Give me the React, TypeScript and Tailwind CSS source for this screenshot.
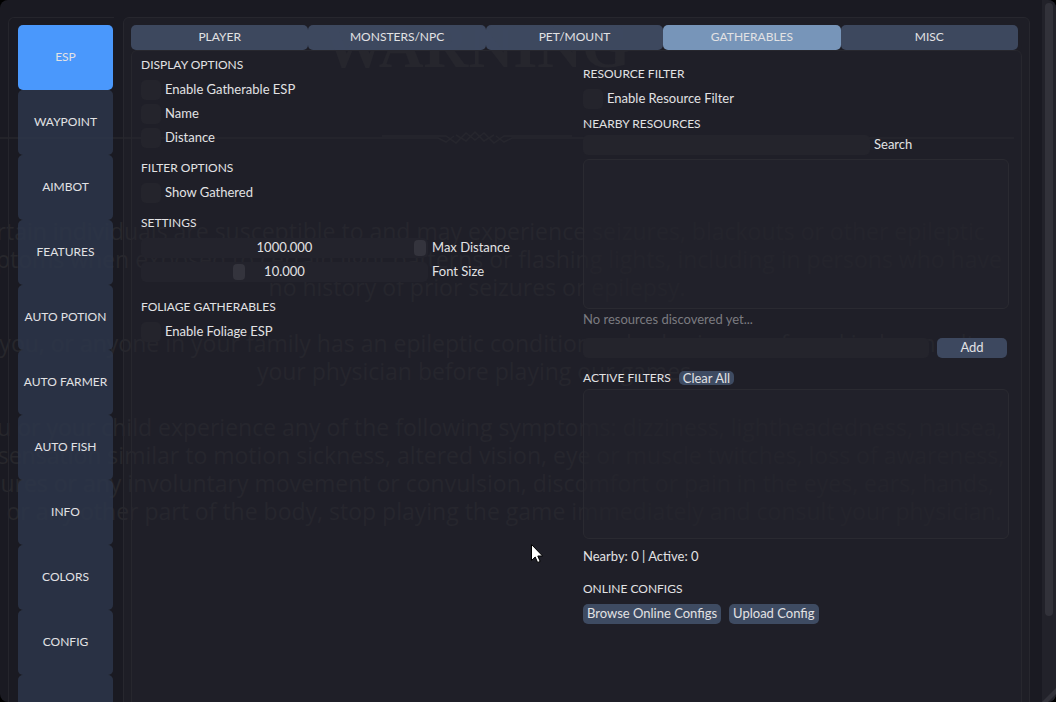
import React from "react";

const navItems = ["ESP", "WAYPOINT", "AIMBOT", "FEATURES", "AUTO POTION", "AUTO FARMER", "AUTO FISH", "INFO", "COLORS", "CONFIG", ""];
const tabs = ["PLAYER", "MONSTERS/NPC", "PET/MOUNT", "GATHERABLES", "MISC"];

const notice = [
  "Certain individuals are susceptible to and may experience seizures, blackouts or other epileptic",
  "symptoms when exposed to certain light patterns or flashing lights, including in persons who have",
  "no history of prior seizures or epilepsy.",
  "",
  "If you, or anyone in your family has an epileptic condition or had seizures of any kind, consult",
  "your physician before playing our games.",
  "",
  "If you or your child experience any of the following symptoms: dizziness, lightheadedness, nausea,",
  "or a sensation similar to motion sickness, altered vision, eye or muscle twitches, loss of awareness,",
  "seizures or any involuntary movement or convulsion, discomfort or pain in the eyes, ears, hands,",
  "legs, or any other part of the body, stop playing the game immediately and consult your physician.",
];

function Backdrop() {
  return (
    <div aria-hidden="true" className="pointer-events-none absolute inset-0 overflow-hidden text-[#27272c]">
      <div className="flex w-[954px] flex-col items-center">
        <div className="mt-2 h-[76px] font-['Liberation_Serif',serif] text-[62px] leading-[76px] font-bold">WARNING</div>
        <svg className="mt-[42px] h-5 w-full overflow-visible" viewBox="0 0 954 20" fill="none" stroke="currentColor" strokeWidth="1.5">
          <path d="M0 12H438L446 16L454 10M1014 12H512L504 16L496 10M382 10H446L456 17L466 7L475 14L484 7L494 17L504 10H572M456 9L466 15L475 6L484 15L494 9" />
        </svg>
        <div className="mt-[71px] flex w-full flex-col font-['Open_Sans',sans-serif] text-[23px] leading-7 font-medium">
          {notice.map((line, i) => (
            <div key={i} className="flex h-7 justify-center whitespace-nowrap">{line}</div>
          ))}
        </div>
      </div>
    </div>
  );
}

function Heading({ children }: { children: React.ReactNode }) {
  return <h2 className="h-4 text-xs leading-4">{children}</h2>;
}

function Check({ label }: { label: string }) {
  return (
    <label className="flex h-5 items-center gap-1">
      <input type="checkbox" className="size-5 appearance-none rounded-[5px] bg-[#24242c] checked:bg-[#4a98fc]" />
      <span className="pb-0.5">{label}</span>
    </label>
  );
}

function Slider({ label, value, max }: { label: string; value: number; max: number }) {
  return (
    <label className="flex h-5 items-center gap-1">
      <span className="relative flex h-5 w-[287px] items-center justify-center rounded-[5px] bg-[#24242c]/90">
        <input
          type="range"
          defaultValue={value}
          min={0}
          max={max}
          className="absolute inset-0 h-5 w-full appearance-none rounded-[5px] bg-transparent px-0.5 [&::-webkit-slider-thumb]:h-4 [&::-webkit-slider-thumb]:w-3 [&::-webkit-slider-thumb]:appearance-none [&::-webkit-slider-thumb]:rounded-[4px] [&::-webkit-slider-thumb]:bg-[#34343d]"
        />
        <span className="pointer-events-none relative pb-0.5">{value.toFixed(3)}</span>
      </span>
      <span className="pb-0.5">{label}</span>
    </label>
  );
}

export default function App() {
  return (
    <div className="h-screen overflow-hidden bg-black font-[Lato,sans-serif] text-[13px] leading-4 text-[#e2e2e4]">
      <div className="relative flex h-full overflow-hidden rounded-lg bg-[#1a1a22]">
        <Backdrop />
        <div className="relative flex min-w-0 flex-1 items-start gap-[9px] pt-[17px] pr-3 pl-2">
          <nav className="w-[106px] shrink-0 rounded-tl-md border-t border-l border-[#25252c] pt-[7px] pl-[9px]">
            {navItems.map((item, i) => (
              <button
                key={i}
                aria-label={item || "More"}
                className={`block h-[65px] w-[95px] rounded-[5px] pb-0.5 text-center text-xs whitespace-nowrap ${i === 0 ? "bg-[#4a98fc]" : "bg-[#2d364a]/85"}`}
              >
                {item}
              </button>
            ))}
          </nav>
          <main className="h-[760px] min-w-0 flex-1 rounded-t-md border border-[#27272e] bg-[#282833]/30 p-[7px]">
            <div className="mr-1 flex h-[25px]">
              {tabs.map((tab) => (
                <button key={tab} className={`flex-1 rounded-[5px] pb-0.5 text-xs ${tab === "GATHERABLES" ? "bg-[#7795b9]" : "bg-[#404d65]/90"}`}>
                  {tab}
                </button>
              ))}
            </div>
            <div className="flex h-[720px] rounded-md border border-[#27272e] bg-[#262630]/30 px-[9px]">
              <section className="flex w-[442px] shrink-0 flex-col pt-[6px]">
                <Heading>DISPLAY OPTIONS</Heading>
                <div className="mt-[7px] flex flex-col gap-1">
                  <Check label="Enable Gatherable ESP" />
                  <Check label="Name" />
                  <Check label="Distance" />
                </div>
                <div className="mt-3"><Heading>FILTER OPTIONS</Heading></div>
                <div className="mt-[7px]"><Check label="Show Gathered" /></div>
                <div className="mt-3"><Heading>SETTINGS</Heading></div>
                <div className="mt-[7px] flex flex-col gap-1">
                  <Slider label="Max Distance" value={1000} max={1000} />
                  <Slider label="Font Size" value={10} max={30} />
                </div>
                <div className="mt-[17px]"><Heading>FOLIAGE GATHERABLES</Heading></div>
                <div className="mt-[7px]"><Check label="Enable Foliage ESP" /></div>
              </section>
              <section className="flex min-w-0 flex-1 flex-col pt-[15px] pr-[3px]">
                <Heading>RESOURCE FILTER</Heading>
                <div className="mt-[7px]"><Check label="Enable Resource Filter" /></div>
                <div className="mt-[7px]"><Heading>NEARBY RESOURCES</Heading></div>
                <label className="mt-[3px] flex h-5 items-center gap-1">
                  <input type="text" className="h-5 w-[287px] rounded-[5px] bg-[#24242c] px-1 outline-none" />
                  <span className="pb-0.5">Search</span>
                </label>
                <div className="mt-1 h-[150px] rounded-md border border-[#2a2a31] bg-[#23232b]/60" />
                <p className="mt-[3px] h-4 leading-[14px] text-[#7b7b80]">No resources discovered yet...</p>
                <div className="mt-[10px] flex h-5 gap-2 pr-0.5">
                  <input type="text" aria-label="Resource name" className="h-5 min-w-0 flex-1 rounded-[5px] bg-[#24242c] px-1 outline-none" />
                  <button className="h-5 w-[70px] rounded-[5px] bg-[#404d65]/90 pb-0.5">Add</button>
                </div>
                <div className="mt-3 flex h-4 items-center gap-2">
                  <Heading>ACTIVE FILTERS</Heading>
                  <button className="h-[14px] rounded-[5px] bg-[#3e4b62] px-1 leading-[13px]">Clear All</button>
                </div>
                <div className="mt-[3px] h-[150px] rounded-md border border-[#2a2a31] bg-[#23232b]/60" />
                <p className="mt-[10px] h-4 leading-[14px]">Nearby: 0 | Active: 0</p>
                <div className="mt-4"><Heading>ONLINE CONFIGS</Heading></div>
                <div className="mt-[7px] flex h-5 gap-2">
                  <button className="rounded-[5px] bg-[#3e4b62] px-1 pb-0.5">Browse Online Configs</button>
                  <button className="rounded-[5px] bg-[#3e4b62] px-1 pb-0.5">Upload Config</button>
                </div>
              </section>
            </div>
          </main>
        </div>
        <div className="relative w-[14px] shrink-0 bg-[#22222a] px-[3px] pt-[3px]">
          <div className="h-[613px] w-2 rounded bg-[#32323a]" />
          <svg className="absolute right-0 bottom-0 h-[14px] w-[14px]" viewBox="0 0 14 14"><path d="M14 0V6L6 14H0Z" fill="#32323a" /></svg>
        </div>
      </div>
      <svg className="pointer-events-none absolute top-[544px] left-[531px] h-5 w-3" viewBox="0 0 12 20">
        <path d="M0.5 0.5V16.5L4.2 13L6.6 18.5L9.2 17.4L6.8 12H11.6Z" fill="#fff" stroke="#000" />
      </svg>
    </div>
  );
}
